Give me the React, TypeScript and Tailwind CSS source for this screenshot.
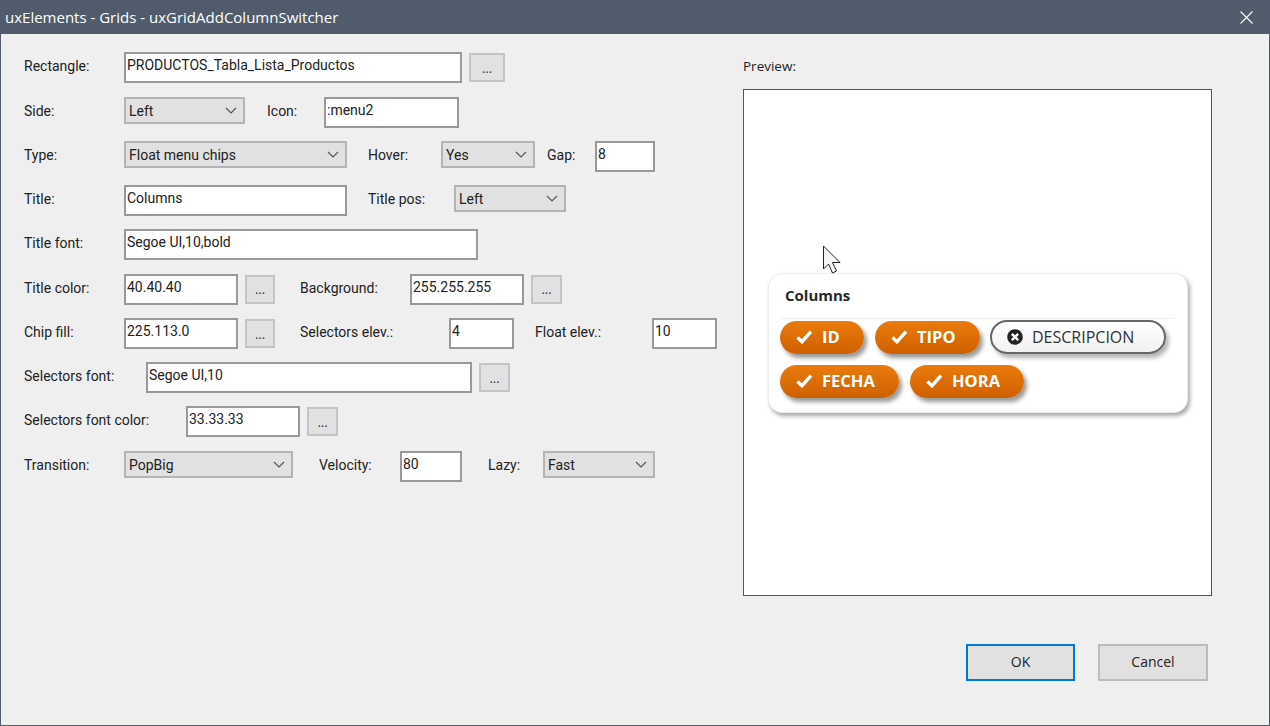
import React from "react";
import { FaTimesCircle } from "react-icons/fa";

const font = "font-['Open_Sans','Noto_Sans',sans-serif]";
const formFont = "font-['Roboto','Open_Sans',sans-serif]";

const Label = ({ text, className = "" }: { text: string; className?: string }) => (
  <span className={`shrink-0 pt-[1px] text-[14px] leading-[27px] text-[#222] ${formFont} ${className}`}>{text}</span>
);

const Input = ({ value, className = "" }: { value: string; className?: string }) => (
  <div className={`h-[31px] shrink-0 border-2 border-[#999] bg-white pl-[1px] text-[14px] leading-[22px] text-[#222] ${formFont} ${className}`}>
    {value}
  </div>
);

const Select = ({ value, className = "" }: { value: string; className?: string }) => (
  <div className={`flex h-[27px] shrink-0 items-center justify-between border-2 border-[#b4b4b4] bg-[#e1e1e1] pl-[3px] pr-[6px] text-[14px] text-[#222] ${formFont} ${className}`}>
    <span className="pt-[2px]">{value}</span>
    <svg width="12" height="7" viewBox="0 0 12 7" fill="none" stroke="#555" strokeWidth="1.2">
      <path d="M1 1l5 5 5-5" />
    </svg>
  </div>
);

const Dots = ({ className = "" }: { className?: string }) => (
  <div className={`mt-[1px] flex h-[29px] shrink-0 items-center justify-center border-2 border-[#c4c4c4] bg-[#e1e1e1] pt-[2px] text-[13px] text-[#333] ${className}`}>
    ...
  </div>
);

const Row = ({ children }: { children: React.ReactNode }) => (
  <div className="flex h-[31px] items-start pl-[23px]">{children}</div>
);

const Check = () => (
  <svg className="mb-[2px] shrink-0" width="17" height="14" viewBox="0 0 17 14" fill="none" stroke="#fff" strokeWidth="3.4">
    <path d="M1.500 7.500l4.500 4.200 9-10" />
  </svg>
);

const Chip = ({ text, className = "" }: { text: string; className?: string }) => (
  <div className={`flex h-[33px] items-center gap-[9px] rounded-full bg-gradient-to-b from-[#e97b0e] to-[#cf6000] pl-[16px] text-[16.5px] font-bold text-white shadow-[3px_4px_4px_#999] ${className}`}>
    <Check />
    <span className="pb-[1px]">{text}</span>
  </div>
);

export default function App() {
  return (
    <div className={`flex h-[726px] w-[1270px] flex-col overflow-hidden border border-[#505c6b] bg-[#efefef] ${font}`}>
      <div className="flex h-[33px] shrink-0 items-center justify-between bg-[#505c6b] pl-[4px] pr-[16px] text-[15px] text-white">
        <span>uxElements - Grids - uxGridAddColumnSwitcher</span>
        <svg width="13" height="13" viewBox="0 0 13 13" stroke="#fff" strokeWidth="1.1">
          <path d="M0.5 0.5l12 12M12.5 0.5l-12 12" />
        </svg>
      </div>

      <div className="flex flex-1">
        <div className="flex w-[742px] shrink-0 flex-col gap-[13.27px] pt-[18.25px]">
          <Row>
            <Label text="Rectangle:" className="w-[100px]" />
            <Input value="PRODUCTOS_Tabla_Lista_Productos" className="w-[338px]" />
            <Dots className="ml-[7px] w-[36px]" />
          </Row>
          <Row>
            <Label text="Side:" className="w-[100px]" />
            <Select value="Left" className="w-[121px]" />
            <Label text="Icon:" className="ml-[22px] w-[57px]" />
            <Input value=":menu2" className="w-[135px]" />
          </Row>
          <Row>
            <Label text="Type:" className="w-[100px]" />
            <Select value="Float menu chips" className="w-[223px]" />
            <Label text="Hover:" className="ml-[21px] w-[73px]" />
            <Select value="Yes" className="w-[94px]" />
            <Label text="Gap:" className="ml-[12px] w-[48px]" />
            <Input value="8" className="w-[60px]" />
          </Row>
          <Row>
            <Label text="Title:" className="w-[100px]" />
            <Input value="Columns" className="w-[223px]" />
            <Label text="Title pos:" className="ml-[21px] w-[86px]" />
            <Select value="Left" className="w-[112px]" />
          </Row>
          <Row>
            <Label text="Title font:" className="w-[100px]" />
            <Input value="Segoe UI,10,bold" className="w-[354px]" />
          </Row>
          <Row>
            <Label text="Title color:" className="w-[100px]" />
            <Input value="40.40.40" className="w-[114px]" />
            <Dots className="ml-[7px] w-[30px]" />
            <Label text="Background:" className="ml-[25px] w-[110px]" />
            <Input value="255.255.255" className="w-[114px]" />
            <Dots className="ml-[7px] w-[31px]" />
          </Row>
          <Row>
            <Label text="Chip fill:" className="w-[100px]" />
            <Input value="225.113.0" className="w-[114px]" />
            <Dots className="ml-[7px] w-[30px]" />
            <Label text="Selectors elev.:" className="ml-[25px] w-[149px]" />
            <Input value="4" className="w-[65px]" />
            <Label text="Float elev.:" className="ml-[21px] w-[117px]" />
            <Input value="10" className="w-[65px]" />
          </Row>
          <Row>
            <Label text="Selectors font:" className="w-[122px]" />
            <Input value="Segoe UI,10" className="w-[326px]" />
            <Dots className="ml-[7px] w-[31px]" />
          </Row>
          <Row>
            <Label text="Selectors font color:" className="w-[162px]" />
            <Input value="33.33.33" className="w-[114px]" />
            <Dots className="ml-[7px] w-[31px]" />
          </Row>
          <Row>
            <Label text="Transition:" className="w-[100px]" />
            <Select value="PopBig" className="w-[169px]" />
            <Label text="Velocity:" className="ml-[26px] w-[81px]" />
            <Input value="80" className="w-[62px]" />
            <Label text="Lazy:" className="ml-[26px] w-[55px]" />
            <Select value="Fast" className="w-[112px]" />
          </Row>
        </div>

        <div className="flex flex-1 flex-col">
          <div className="mt-[21px] h-[23px] text-[13.5px] leading-[23px] text-[#222]">Preview:</div>
          <div className="relative mt-[11px] h-[507px] w-[469px] border border-[#555] bg-white pl-[24px] pt-[183px]">
            <svg className="absolute left-[78px] top-[155px]" width="19" height="30" viewBox="0 0 19 30">
              <path d="M1.500 1v23l5-5 4 9 4-2-4-8.500h7.500z" fill="#f4f6f6" stroke="#222" strokeWidth="1" />
            </svg>
            <div className="h-[140px] w-[420px] rounded-[14px] border border-[#eee] bg-white pl-[11px] pt-[9px] shadow-[2px_3px_4px_#a8a8a8]">
              <div className="ml-[5px] h-[35px] text-[15px] font-bold leading-[24px] text-[#282828]">Columns</div>
              <div className="mr-[12px] h-px bg-[#eee]" />
              <div className="mt-[1px] flex">
                <Chip text="ID" className="mt-[1px] w-[84px]" />
                <Chip text="TIPO" className="ml-[11px] mt-[1px] w-[105px]" />
                <div className="ml-[10px] flex h-[34px] w-[176px] items-center gap-[9px] rounded-full border-2 border-[#666] bg-gradient-to-b from-white to-[#f1f1f1] pl-[15px] text-[16px] text-[#333] shadow-[3px_4px_4px_#b5b5b5]">
                  <FaTimesCircle className="shrink-0 text-[16px] text-[#222]" />
                  <span>DESCRIPCION</span>
                </div>
              </div>
              <div className="mt-[11px] flex">
                <Chip text="FECHA" className="w-[119px]" />
                <Chip text="HORA" className="ml-[11px] w-[114px]" />
              </div>
            </div>
          </div>
          <div className="mt-[48px] flex pl-[223px]">
            <div className="flex h-[37px] w-[109px] items-center justify-center border-2 border-[#0078d7] bg-[#e1e1e1] pb-[2px] text-[14px] text-[#222]">
              OK
            </div>
            <div className="ml-[23px] flex h-[37px] w-[110px] items-center justify-center border-2 border-[#bcbcbc] bg-[#e1e1e1] pb-[2px] text-[14px] text-[#222]">
              Cancel
            </div>
          </div>
        </div>
      </div>
    </div>
  );
}
